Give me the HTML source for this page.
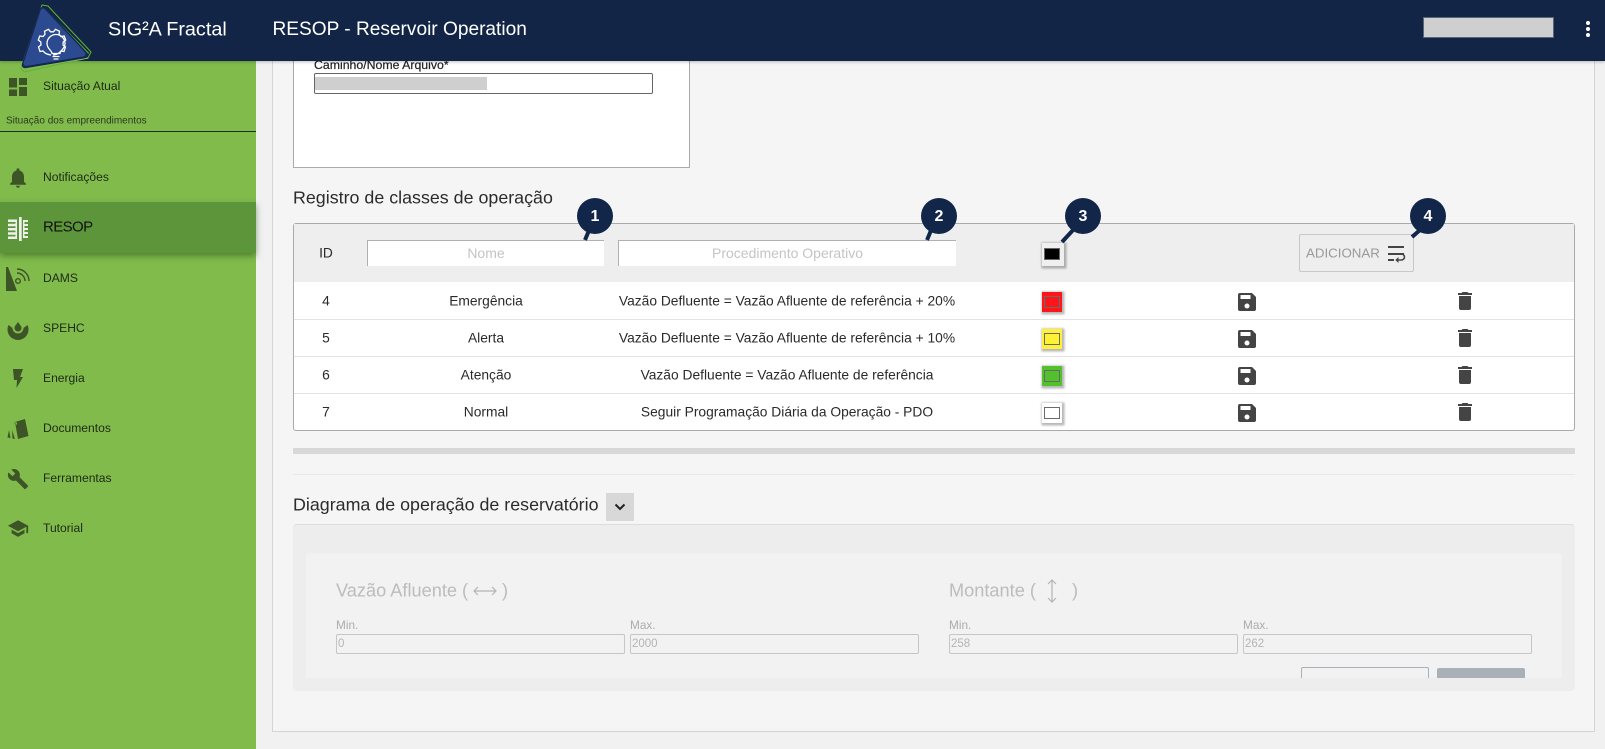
<!DOCTYPE html>
<html lang="pt"><head><meta charset="utf-8"><title>RESOP</title>
<style>
html,body{margin:0;padding:0}
body{width:1605px;height:749px;overflow:hidden;position:relative;background:#f1f1f1;font-family:"Liberation Sans",sans-serif;color:#222}
.a{position:absolute;white-space:nowrap}
.m{transform:translateY(-50%)}
.nav{font-size:12.1px;left:43px;color:#1e2a14;transform:translateY(-50%)}
.ico{position:absolute}
.cell{font-size:13.8px;color:#2a2a2a;transform:translate(-50%,-50%)}
.line{position:absolute;left:294px;width:1280px;height:1px;background:#e3e3e3}
.sw{position:absolute;left:1042px;width:20px;height:20px;box-shadow:1px 1px 2px 1.5px rgba(0,0,0,.28)}
.sw i{position:absolute;left:2px;top:4px;width:16px;height:12px;border:1.3px solid #6a6a6a;box-sizing:border-box}
.dis{background:#f2f2f2;border:1px solid #c6c6c6;border-radius:2px;height:18px;position:absolute;top:634px;font-size:11.5px;color:#b4b4b4;line-height:18px;padding-left:1px;box-sizing:content-box}
.lab{font-size:11.8px;color:#acacac;top:625px;transform:translateY(-50%)}
.t{font-size:18.2px;color:#bcbcbc;top:591px;transform:translateY(-50%)}
</style></head><body>

<!-- main panel -->
<div class="a" style="left:272px;top:55px;width:1323px;height:677px;background:#f5f5f5;border:1px solid #d4d4d4;box-sizing:border-box"></div>

<!-- file box -->
<div class="a" style="left:293px;top:50px;width:397px;height:118px;background:#fff;border:1px solid #aaa;box-sizing:border-box"></div>
<div class="a m" style="left:314px;top:64.5px;font-size:12.3px;color:#222;-webkit-text-stroke:.2px #222">Caminho/Nome Arquivo*</div>
<div class="a" style="left:314px;top:73px;width:339px;height:21px;border:1px solid #666;border-radius:2px;box-sizing:border-box;background:#fff"></div>
<div class="a" style="left:315px;top:77px;width:172px;height:13px;background:#cfcfcf"></div>

<!-- Registro -->
<div class="a m" style="left:293px;top:198px;font-size:17.85px;color:#2b2b2b">Registro de classes de operação</div>
<div class="a" style="left:293px;top:223px;width:1282px;height:208px;background:#fff;border:1px solid #aaa;border-radius:3px;box-sizing:border-box"></div>
<div class="a" style="left:294px;top:224px;width:1280px;height:58px;background:#eee"></div>
<div class="a cell" style="left:326px;top:253px">ID</div>
<div class="a" style="left:367px;top:240px;width:237px;height:26px;background:#fff;border-top:1px solid #b0b0b0;border-left:1px solid #b0b0b0;box-sizing:border-box;text-align:center;line-height:25px;font-size:14px;color:#c4c4c4">Nome</div>
<div class="a" style="left:618px;top:240px;width:338px;height:26px;background:#fff;border-top:1px solid #b0b0b0;border-left:1px solid #b0b0b0;box-sizing:border-box;text-align:center;line-height:25px;font-size:14px;color:#c4c4c4">Procedimento Operativo</div>
<div class="a" style="left:1042px;top:243px;width:22px;height:23px;background:#efefef;box-shadow:1px 1px 2px 1.5px rgba(0,0,0,.28)"></div>
<div class="a" style="left:1044px;top:248px;width:16px;height:12px;background:#000;border:1px solid #666;box-sizing:border-box"></div>
<div class="a" style="left:1299px;top:234px;width:115px;height:38px;border:1px solid #c8c8c8;border-radius:2px;box-sizing:border-box"></div>
<div class="a m" style="left:1306px;top:253px;font-size:13.3px;color:#999">ADICIONAR</div>
<svg class="ico" style="left:1386px;top:244px" width="20" height="20" viewBox="0 0 20 20"><path d="M2 2h16v2H2zM2 9h16v2H2zM2 15h6v2H2z" fill="#444"/><path d="M11 10h4.500a2.800 2.800 0 0 1 0 6H10" fill="none" stroke="#444" stroke-width="1.600"/><path d="M12.500 13l-3.200 3 3.200 3z" fill="#444"/></svg>

<div class="line" style="top:319px"></div><div class="line" style="top:356px"></div><div class="line" style="top:393px"></div>

<div class="a cell" style="left:326px;top:301px">4</div><div class="a cell" style="left:486px;top:301px">Emergência</div><div class="a cell" style="left:787px;top:301px">Vazão Defluente = Vazão Afluente de referência + 20%</div>
<div class="a cell" style="left:326px;top:338px">5</div><div class="a cell" style="left:486px;top:338px">Alerta</div><div class="a cell" style="left:787px;top:338px">Vazão Defluente = Vazão Afluente de referência + 10%</div>
<div class="a cell" style="left:326px;top:375px">6</div><div class="a cell" style="left:486px;top:375px">Atenção</div><div class="a cell" style="left:787px;top:375px">Vazão Defluente = Vazão Afluente de referência</div>
<div class="a cell" style="left:326px;top:412px">7</div><div class="a cell" style="left:486px;top:412px">Normal</div><div class="a cell" style="left:787px;top:412px">Seguir Programação Diária da Operação - PDO</div>

<div class="sw" style="top:292px;background:#ff1418"><i></i></div>
<div class="sw" style="top:329px;background:#fff136"><i></i></div>
<div class="sw" style="top:366px;background:#52c22c"><i></i></div>
<div class="sw" style="top:403px;background:#fff"><i></i></div>

<svg width="0" height="0" style="position:absolute"><defs>
<symbol id="save" viewBox="0 0 24 24"><path d="M17 3H5a2 2 0 0 0-2 2v14a2 2 0 0 0 2 2h14a2 2 0 0 0 2-2V7l-4-4zm-5 15.500a2.500 2.500 0 1 1 0-5 2.500 2.500 0 0 1 0 5zM15.500 9h-10V5h10v4z" fill="#444" fill-rule="evenodd"/></symbol>
<symbol id="trash" viewBox="0 0 24 24"><path d="M6 19a2 2 0 0 0 2 2h8a2 2 0 0 0 2-2V7H6v12zM19 4h-3.500l-1-1h-5l-1 1H5v2h14V4z" fill="#444"/></symbol>
</defs></svg>
<svg class="ico" style="left:1235px;top:290px" width="24" height="24"><use href="#save"/></svg>
<svg class="ico" style="left:1235px;top:327px" width="24" height="24"><use href="#save"/></svg>
<svg class="ico" style="left:1235px;top:364px" width="24" height="24"><use href="#save"/></svg>
<svg class="ico" style="left:1235px;top:401px" width="24" height="24"><use href="#save"/></svg>
<svg class="ico" style="left:1453px;top:289px" width="24" height="24"><use href="#trash"/></svg>
<svg class="ico" style="left:1453px;top:326px" width="24" height="24"><use href="#trash"/></svg>
<svg class="ico" style="left:1453px;top:363px" width="24" height="24"><use href="#trash"/></svg>
<svg class="ico" style="left:1453px;top:400px" width="24" height="24"><use href="#trash"/></svg>

<!-- callouts -->
<svg class="ico" style="left:0;top:0;pointer-events:none" width="1605" height="280">
<g fill="#12264a" stroke="none"><circle cx="595" cy="216" r="18"/><circle cx="939" cy="216" r="18"/><circle cx="1083" cy="216" r="18"/><circle cx="1428" cy="216" r="18"/></g>
<g stroke="#12264a" stroke-width="4" fill="none"><path d="M590 228L585 240M932 228L927 240M1074 229L1062 242M1420 230L1412 237"/></g>
<g fill="#fff" font-family="Liberation Sans,sans-serif" font-size="16" font-weight="700" text-anchor="middle"><text x="595" y="221">1</text><text x="939" y="221">2</text><text x="1083" y="221">3</text><text x="1428" y="221">4</text></g>
</svg>

<!-- separators -->
<div class="a" style="left:293px;top:448px;width:1282px;height:6px;background:#d8d8d8"></div>
<div class="a" style="left:293px;top:474px;width:1282px;height:1px;background:#e8e8e8"></div>

<!-- Diagrama -->
<div class="a m" style="left:293px;top:505px;font-size:17.85px;color:#2b2b2b">Diagrama de operação de reservatório</div>
<div class="a" style="left:606px;top:493px;width:28px;height:28px;background:#d8d8d8"></div>
<svg class="ico" style="left:612px;top:499px" width="16" height="16" viewBox="0 0 16 16"><path d="M3.500 5.500L8 10l4.500-4.500" fill="none" stroke="#222" stroke-width="2"/></svg>

<div class="a" style="left:293px;top:524px;width:1282px;height:167px;background:#ededed;border-top:1px solid #ddd;border-radius:4px;box-sizing:border-box"></div>
<div class="a" style="left:306px;top:553px;width:1256px;height:125px;background:#f2f2f2;border-radius:3px 3px 0 0;overflow:hidden"></div>

<div class="a t" style="left:336px">Vazão Afluente (</div>
<div class="a t" style="left:502px">)</div>
<svg class="ico" style="left:472px;top:584px" width="26" height="14" viewBox="0 0 26 14"><path d="M2 7h22M6 3L2 7l4 4M20 3l4 4-4 4" fill="none" stroke="#b4b4b4" stroke-width="1.200"/></svg>
<div class="a lab" style="left:336px">Min.</div>
<div class="a lab" style="left:630px">Max.</div>
<div class="dis" style="left:336px;width:286px">0</div>
<div class="dis" style="left:630px;width:286px">2000</div>

<div class="a t" style="left:949px">Montante (</div>
<div class="a t" style="left:1072px">)</div>
<svg class="ico" style="left:1045px;top:578px" width="14" height="26" viewBox="0 0 14 26"><path d="M7 2v22M3 6l4-4 4 4M3 20l4 4 4-4" fill="none" stroke="#b4b4b4" stroke-width="1.200"/></svg>
<div class="a lab" style="left:949px">Min.</div>
<div class="a lab" style="left:1243px">Max.</div>
<div class="dis" style="left:949px;width:286px">258</div>
<div class="dis" style="left:1243px;width:286px">262</div>

<div class="a" style="left:1301px;top:667px;width:128px;height:11px;border:1px solid #a9b0b8;border-bottom:none;border-radius:2px 2px 0 0;box-sizing:border-box"></div>
<div class="a" style="left:1437px;top:668px;width:88px;height:10px;background:#a9b0b8;border-radius:2px 2px 0 0"></div>

<!-- sidebar -->
<div class="a" style="left:0;top:0;width:256px;height:749px;background:#80bb4c"></div>
<div class="a" style="left:0;top:131px;width:256px;height:1px;background:#1c3017"></div>
<div class="a" style="left:0;top:202px;width:256px;height:51px;background:#5d953a;box-shadow:0 3px 6px rgba(40,70,20,.5)"></div>

<div class="a nav" style="top:86px">Situação Atual</div>
<div class="a m" style="left:6px;top:121px;font-size:10px;color:#2c3a1f">Situação dos empreendimentos</div>
<div class="a nav" style="top:177px">Notificações</div>
<div class="a m" style="left:43px;top:227px;font-size:15px;letter-spacing:-.6px;color:#111">RESOP</div>
<div class="a nav" style="top:278px">DAMS</div>
<div class="a nav" style="top:328px">SPEHC</div>
<div class="a nav" style="top:378px">Energia</div>
<div class="a nav" style="top:428px">Documentos</div>
<div class="a nav" style="top:478px">Ferramentas</div>
<div class="a nav" style="top:528px">Tutorial</div>

<!-- sidebar icons -->
<svg class="ico" style="left:0;top:61px" width="40" height="480" viewBox="0 61 40 480">
<g fill="#3d5426">
<path d="M9 78h8v9.500H9zM19 78h8v7h-8zM9 89.500h8V96H9zM19 87h8v9h-8z"/>
<path transform="translate(6 165.800)" d="M12 22c1.100 0 2-.9 2-2h-4c0 1.100.9 2 2 2zm6-6v-5c0-3.070-1.630-5.640-4.500-6.320V4c0-.830-.670-1.500-1.500-1.500s-1.500.670-1.500 1.500v.680C7.640 5.360 6 7.920 6 11v5l-2 2v1h16v-1l-2-2z"/>
<path d="M6 267h2l9 24H6z"/>
<path d="M17 273a8 8 0 0 1 8 8M17 269a12 12 0 0 1 12 12" fill="none" stroke="#3d5426" stroke-width="1.400"/>
<circle cx="18" cy="281" r="2.300" fill="none" stroke="#3d5426" stroke-width="1.400"/>
<path d="M18 322c2 3 3.500 4 3.500 6a3.500 3.500 0 0 1-7 0c0-2 1.500-3 3.500-6z"/>
<path d="M8.500 325A10.500 10.500 0 1 0 27.500 325L23.500 328A5.500 5.500 0 0 1 12.500 328z"/>
<path d="M13 369h10l-3 8h3l-6.500 11 .5-8H14z"/>
<path fill-rule="evenodd" d="M15 422l10-3 3.500 17L18 439zM14.500 423.500a1.300 1.300 0 1 0 2.600 0 1.300 1.300 0 0 0-2.600 0z"/>
<path d="M12 430l3 9-2.500-.5zM9 430l1.500 8-3-.5z"/>
<path transform="translate(7 468) scale(.92)" d="M22.700 19l-9.100-9.100c.9-2.300.4-5-1.500-6.900-2-2-5-2.400-7.400-1.300L9 6 6 9 1.600 4.700C.4 7.100.9 10.100 2.900 12.100c1.900 1.900 4.600 2.400 6.900 1.500l9.100 9.100c.4.4 1 .4 1.400 0l2.300-2.300c.5-.4.5-1.100.1-1.400z"/>
<path transform="translate(7 517.500) scale(.92)" d="M5 13.180v4L12 21l7-3.820v-4L12 17l-7-3.820zM12 3L1 9l11 6 9-4.910V17h2V9L12 3z"/>
</g>
<g fill="#eef1ea">
<path d="M8 219.500h9V222H8zM8 223.800h9v2.500H8zM8 228h9v2.500H8zM8 232.300h9v2.500H8zM8 236.500h9V239H8zM15.500 219.500H17V239h-1.500z"/>
<path d="M19 217h2.700v24H19z"/>
<path d="M23 220h5v2h-5zM23 224h5v2h-5zM23 228h5v2h-5zM23 232h5v2h-5zM23 236h5v2h-5zM23 220h1.500v18H23z"/>
</g>
</svg>

<!-- header -->
<div class="a" style="left:0;top:0;width:1605px;height:61px;background:#132546;box-shadow:0 1px 3px rgba(0,0,0,.25)"></div>
<div class="a m" style="left:108px;top:29.5px;font-size:19.8px;color:#fff">SIG²A Fractal</div>
<div class="a m" style="left:272.500px;top:29.5px;font-size:19.1px;color:#fff">RESOP - Reservoir Operation</div>
<div class="a" style="left:1423px;top:17px;width:131px;height:21px;background:#cfcfcf;border:1px solid #5a6578;box-sizing:border-box"></div>
<div class="a" style="left:1586px;top:21px;width:4px;height:4px;background:#fff;border-radius:50%"></div>
<div class="a" style="left:1586px;top:27px;width:4px;height:4px;background:#fff;border-radius:50%"></div>
<div class="a" style="left:1586px;top:33px;width:4px;height:4px;background:#fff;border-radius:50%"></div>

<!-- logo -->
<svg class="ico" style="left:15px;top:0" width="85" height="75" viewBox="15 0 85 75">
<path d="M42 5L48 6 91 52 88 58 24 72 21 68z" fill="none" stroke="#5fb336" stroke-width="1" stroke-linejoin="round"/>
<path d="M24 68L88 58" fill="none" stroke="#a5d27a" stroke-width="1"/>
<path d="M46 9L89 53 85 58 60 40z" fill="#69b92f"/>
<path d="M43 10L85 55 25 65z" fill="#14284e" stroke="#14284e" stroke-width="6.500" stroke-linejoin="round"/>
<path d="M43 11L83 54 26 63.500z" fill="#2b4a8f" stroke="#2b4a8f" stroke-width="5" stroke-linejoin="round"/>
<g fill="none" stroke="#fff" stroke-width="1.300" transform="translate(4 1.500)">
<path d="M47 53.500c-3-.5-5-1-6.500-2.500l-1.500-1.500-3 .5-1.500-4.500 2.500-2-.2-3-2.500-2 1.500-4 3.200.5 2-2.200-.5-3 4-2 2 2.500h3l2-2.500 4 2-.5 3 2 2.200 3.200-.5 1.500 4-2.500 2-.2 3 2.500 2-1.500 4.500-3-.5-1.500 1.500c-1.500 1.500-3.500 2-6.500 2.500"/>
<path d="M48 52c0-3-5-4.500-5-10a9 9 0 0 1 18 0c0 5.500-5 7-5 10z"/>
<path d="M48.500 55h7M49.500 57.500h5"/>
</g>
</svg>
</body></html>
